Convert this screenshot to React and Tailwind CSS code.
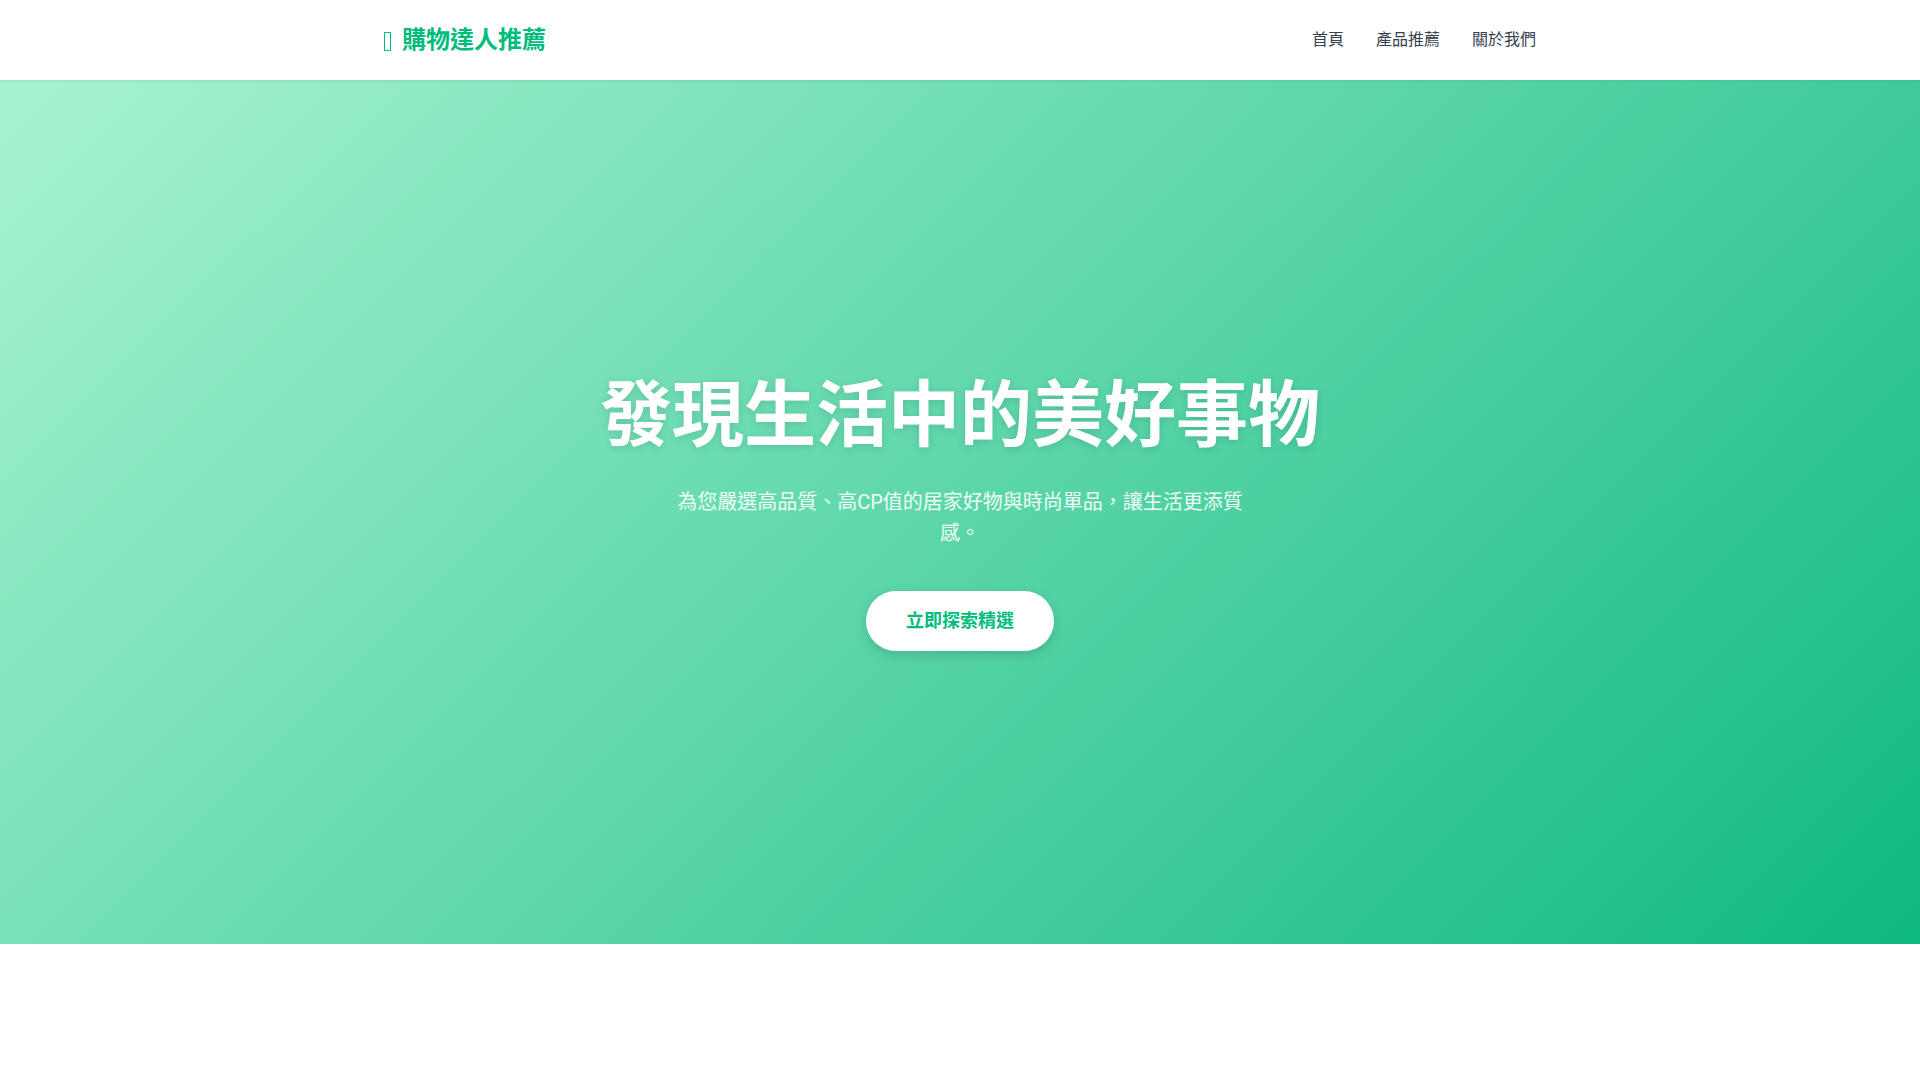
import React from 'react'

const links = ['首頁', '產品推薦', '關於我們']

function Header() {
  return (
    <header className="h-20 bg-white shadow-[0_1px_3px_rgba(0,0,0,0.08)] relative z-10">
      <div className="max-w-6xl mx-auto h-full flex items-center justify-between">
        <a href="#" className="flex items-center gap-[11px] text-emerald-500">
          <span className="w-[7px] h-[19px] border border-emerald-500 mt-[2px]" />
          <span className="text-2xl font-bold leading-none">購物達人推薦</span>
        </a>
        <nav className="flex items-center gap-8">
          {links.map((l) => (
            <a key={l} href="#" className="text-base text-gray-700 hover:text-emerald-500">
              {l}
            </a>
          ))}
        </nav>
      </div>
    </header>
  )
}

function Hero() {
  return (
    <section className="min-h-[80vh] flex flex-col items-center justify-center text-center text-white bg-[linear-gradient(135deg,#a7f3d0_0%,#10b981_100%)]">
      <h1 className="text-7xl font-bold leading-[1.2] mb-[27px] [text-shadow:0_2px_8px_rgba(0,0,0,0.12)]">
        發現生活中的美好事物
      </h1>
      <p className="max-w-xl text-xl leading-[1.55] text-white/90 mb-[42px]">
        為您嚴選高品質、高CP值的居家好物與時尚單品，讓生活更添質感。
      </p>
      <a
        href="#"
        className="bg-white text-emerald-500 font-bold text-lg leading-6 px-10 py-[18px] rounded-full shadow-[0_4px_12px_rgba(0,0,0,0.15)]"
      >
        立即探索精選
      </a>
    </section>
  )
}

export default function App() {
  return (
    <div className="min-h-screen bg-white font-['Roboto','Noto_Sans_CJK_TC',sans-serif]">
      <Header />
      <Hero />
    </div>
  )
}
